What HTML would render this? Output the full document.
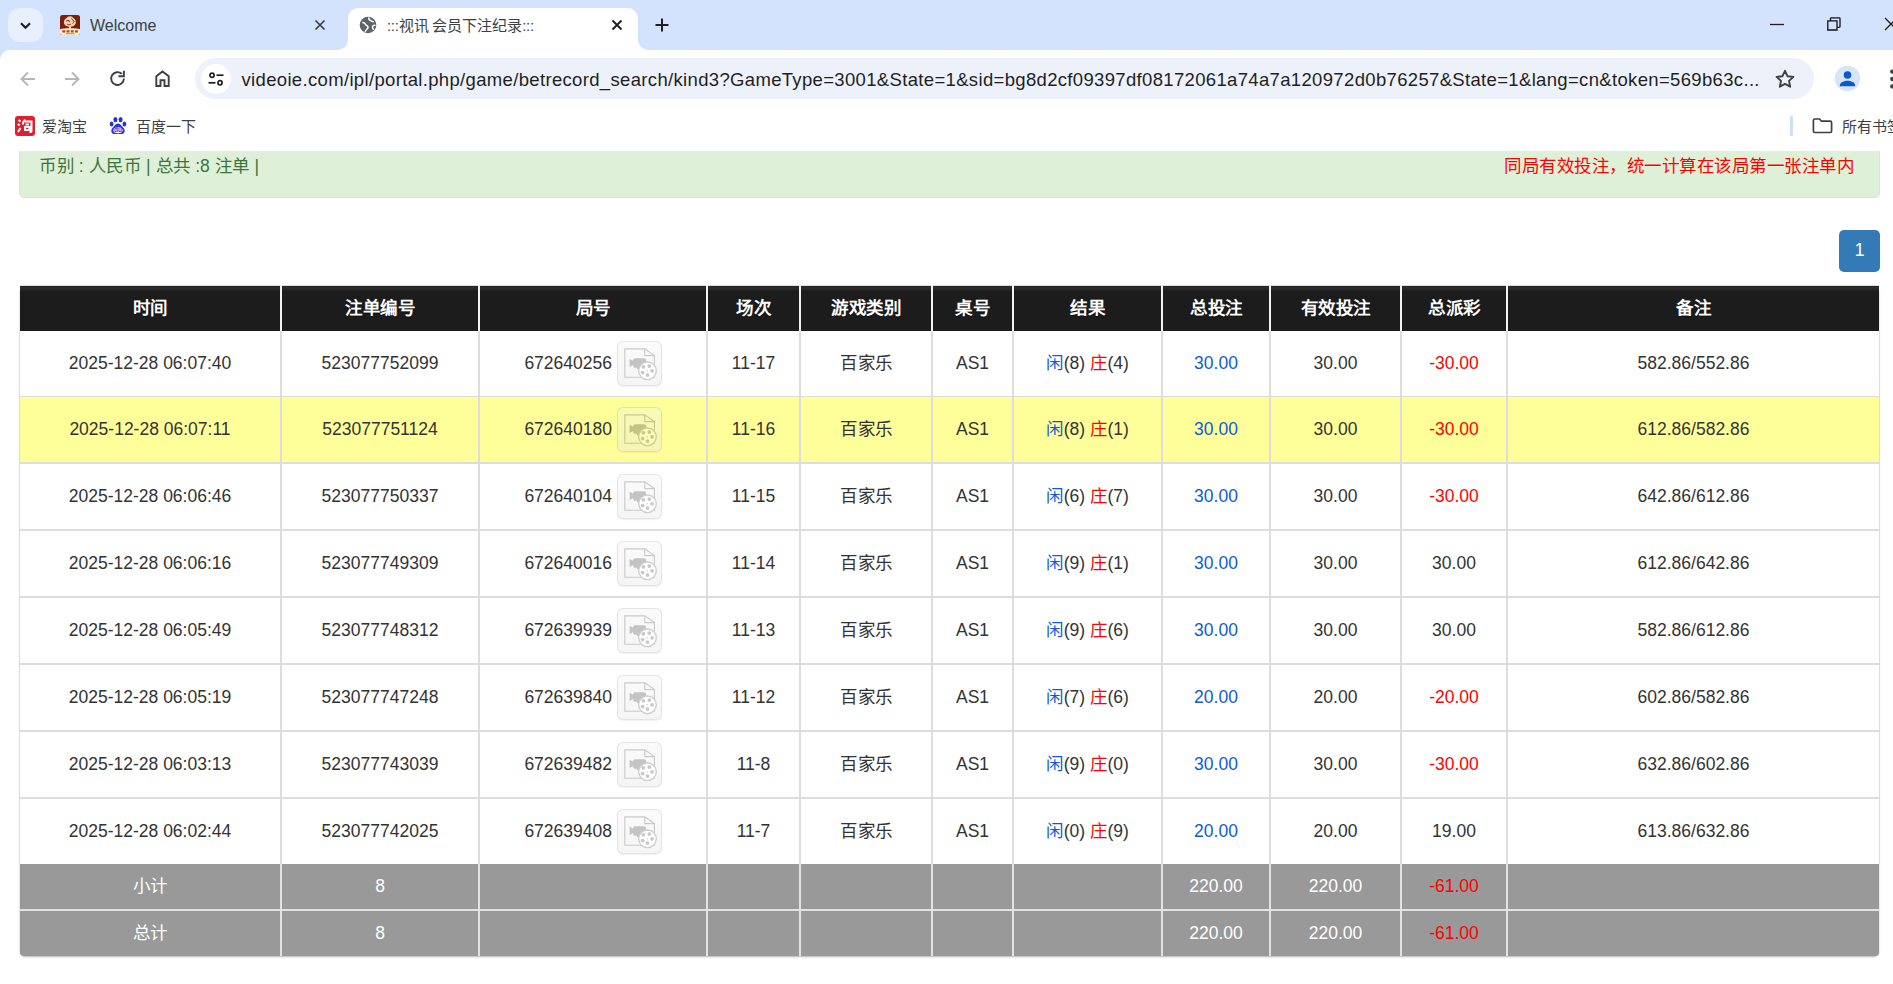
<!DOCTYPE html>
<html lang="zh-CN">
<head>
<meta charset="utf-8">
<title>:::视讯 会员下注纪录:::</title>
<style>
*{box-sizing:border-box;margin:0;padding:0}
html,body{width:1893px;height:984px;overflow:hidden;background:#fff}
body{position:relative;font-family:"Liberation Sans",sans-serif;color:#333}
.abs{position:absolute}
svg{display:block}
i{display:inline-block;width:1em;text-align:center;font-style:normal;white-space:nowrap}
/* ---------- chrome ---------- */
#tabstrip{position:absolute;left:0;top:0;width:1893px;height:50px;background:#d3e3fd}
#tabsearch{position:absolute;left:8px;top:8px;width:35px;height:34px;border-radius:12px;background:#e8effd}
.tabtitle{position:absolute;top:15.5px;font-size:16px;line-height:20px;color:#3c4043;white-space:nowrap}
#tab2{position:absolute;left:348px;top:7.500px;width:289.500px;height:42px;background:#fff;border-radius:10px 10px 0 0}
#tab2:before,#tab2:after{content:"";position:absolute;bottom:0;width:10px;height:10px}
#tab2:before{left:-10px;background:radial-gradient(circle at 0 0,rgba(255,255,255,0) 9.5px,#fff 10px)}
#tab2:after{right:-10px;background:radial-gradient(circle at 100% 0,rgba(255,255,255,0) 9.5px,#fff 10px)}
#toolbar{position:absolute;left:0;top:50px;width:1893px;height:58px;background:#fff;border-radius:10px 0 0 0}
#tbcorner{position:absolute;left:0;top:50px;width:10px;height:10px;background:#d3e3fd}
#omni{position:absolute;left:195px;top:58px;width:1619px;height:41px;border-radius:20.5px;background:#edf1fa}
#siteinfo{position:absolute;left:201px;top:64px;width:30px;height:30px;border-radius:15px;background:#fff}
#bm{position:absolute;left:0;top:108px;width:1893px;height:40px;background:#fff}
.bmt{position:absolute;top:117px;font-size:15px;line-height:20px;color:#3c4043;white-space:nowrap}
/* ---------- page ---------- */
#alert{position:absolute;left:19px;top:130px;width:1861px;height:68px;background:#dff0d8;border:1px solid #d6e9c6;border-radius:5px;clip-path:inset(21px 0 0 0)}
#alert .l{position:absolute;left:19px;top:23px;font-size:17.5px;line-height:25px;color:#3c763d;white-space:nowrap}
#alert .rt{position:absolute;right:25px;top:23px;font-size:17.5px;line-height:25px;color:#ff0000;white-space:nowrap}
#pg{position:absolute;left:1839px;top:230px;width:41px;height:42px;border-radius:5px;background:#337ab7;color:#fff;font-size:17.5px;line-height:40px;text-align:center}
.tbl{position:absolute;left:0;top:0;width:1893px;height:984px;font-size:17.5px;line-height:25px}
.tbl:before{content:"";position:absolute;left:20px;top:290px;width:1859px;height:666px;border-radius:0 0 5px 5px;box-shadow:0 1px 2px rgba(0,0,0,.3)}
.hd{position:absolute;background:linear-gradient(#262626 0,#262626 1px,#2d2d2d 1px,#2a2a2a 2.500px,#1c1c1c 5.500px,#1c1c1c 100%);box-shadow:0 -1px 0 rgba(0,0,0,.13)}
.hs{position:absolute;top:285px;width:2px;height:46px;background:#f2f2f2}
.c{position:absolute;top:0;height:100%;display:flex;align-items:center;justify-content:center;white-space:pre;text-align:center;padding-bottom:0}
.hc{color:#fff;font-weight:bold;text-shadow:0 1px 1px rgba(0,0,0,.6);padding-bottom:1px}
.rw{position:absolute;left:20px;width:1859px;background:#fff}
.rw .c{margin-left:-20px}
.hl{background:#ffff99}
.ft{background:#999;color:#fff}
.ft .c{padding-bottom:0}
.hl1{position:absolute;left:20px;width:1859px;background:#ddd}
.hl2{position:absolute;left:20px;width:1859px;background:#e2e2e2}
.vl{position:absolute;top:331px;width:2px;height:625px;background:linear-gradient(#ddd 533px,#e2e2e2 533px)}
.vo{position:absolute;top:331px;width:1px;height:622px;background:linear-gradient(#ddd 533px,#e9e9e9 533px)}
.ft2{border-radius:0 0 4px 4px}
.b{color:#0d5bdd}
.r{color:#ff0000}
.vb{display:block;width:45px;height:45px;margin-left:5px;border-radius:6px;background:linear-gradient(#f4f4f4,#e4e4e4);opacity:.35;box-shadow:inset 0 0 0 1px #b4b4b4,0 1px 1px rgba(0,0,0,.15)}
.g .gn{position:absolute;right:94px;top:0;height:100%;display:flex;align-items:center}
.g .vb{position:absolute;left:137px;top:10px;margin:0}
</style>
</head>
<body>
<!-- ======= Chrome tab strip ======= -->
<div id="tabstrip">
  <div id="tabsearch"><svg class="abs" style="left:10px;top:10px" width="15" height="15" viewBox="0 0 15 15"><path d="M3 5.2l4.5 4.5L12 5.2" fill="none" stroke="#1f1f1f" stroke-width="2.1"/></svg></div>
  <!-- tab 1 -->
  <svg class="abs" style="left:60px;top:15px" width="20" height="20" viewBox="0 0 20 20"><rect width="20" height="20" rx="2.500" fill="#7b1f07"/><path d="M10.300 1.200c1.500 0 2.300.9 3 1.900 1.500.7 2.600 2.300 2.600 4.200 0 2.400-1.800 3.700-3.800 4.100l-1.300.3.600 2.300H8.600l.6-2.300-1.500-.3C5.500 11 3.900 9.500 3.900 7.200c0-2 1-3.300 2.400-4C7.100 2 8.600 1.200 10.300 1.200z" fill="#f3d3b8"/><path d="M6 6.500c1-1.500 3-1.500 4 0M7 9c1.200 1 3 1 4 0M11.500 3.500l2.500 3M12.500 8.500c.8-.5 1.500-1.500 1.500-2.500M8.200 5.200l1.500 2" fill="none" stroke="#8a2a10" stroke-width=".9"/><path d="M0 14.200c3.500-1.300 16.500-1.300 20 0V17.500a2.500 2.500 0 0 1-2.500 2.500h-15A2.500 2.500 0 0 1 0 17.500z" fill="#fdf1cd"/><path d="M2.300 15.200h3v2.200h-3zM6.500 15.200h3v2.200h-3zM10.700 15.200h3v2.200h-3zM14.900 15.200h3v2.200h-3z" fill="#b5452a"/><path d="M6 18.200h8.500v1H6z" fill="#c9826a"/></svg>
  <div class="tabtitle" style="left:90px">Welcome</div>
  <svg class="abs" style="left:314px;top:19px" width="12" height="12" viewBox="0 0 12 12"><path d="M1.500 1.500l9 9M10.500 1.500l-9 9" stroke="#3c4043" stroke-width="1.7"/></svg>
  <!-- tab 2 (active) -->
  <div id="tab2"></div>
  <svg class="abs" style="left:359px;top:16px" width="18" height="18" viewBox="0 0 18 18"><circle cx="9" cy="9" r="8.3" fill="#5f6368"/><path d="M3.200 6.500c1.500-.2 2.500.3 3 1.500s1.600 1.200 2.300 2 .300 2.500-.8 3.500S6.500 15 6 15.800M10 1.500c-.5 1.500.2 2.500 1.500 3s2 1.500 3.500 1.200M16.500 9.500c-1.500-.5-2.800 0-3 1.300s.7 2.400 1.200 3" fill="none" stroke="#fff" stroke-width="1.500"/></svg>
  <div class="tabtitle" style="left:387px;font-size:15px;letter-spacing:-.350px">:::<i>视</i><i>讯</i> <i>会</i><i>员</i><i>下</i><i>注</i><i>纪</i><i>录</i>:::</div>
  <svg class="abs" style="left:611px;top:19px" width="12" height="12" viewBox="0 0 12 12"><path d="M1.500 1.500l9 9M10.500 1.500l-9 9" stroke="#1f1f1f" stroke-width="1.900"/></svg>
  <!-- new tab -->
  <svg class="abs" style="left:655px;top:18px" width="14" height="14" viewBox="0 0 14 14"><path d="M7 .5v13M.5 7h13" stroke="#1f1f1f" stroke-width="2"/></svg>
  <!-- window controls -->
  <svg class="abs" style="left:1770px;top:23px" width="14" height="3" viewBox="0 0 14 3"><path d="M0 1.500h14" stroke="#1f1f1f" stroke-width="1.300"/></svg>
  <svg class="abs" style="left:1827px;top:17px" width="14" height="14" viewBox="0 0 14 14"><path d="M.8 3.800h9.200v9.200H.8z M3.500 3.800V1.600q0-.8.800-.8h7.900q.8 0 .8.800v7.900q0 .8-.8.800H10" fill="none" stroke="#111" stroke-width="1.300"/></svg>
  <svg class="abs" style="left:1884px;top:17px" width="14" height="14" viewBox="0 0 14 14"><path d="M1 1l12 12M13 1L1 13" stroke="#1f1f1f" stroke-width="1.300"/></svg>
</div>
<!-- ======= toolbar ======= -->
<div id="tbcorner"></div>
<div id="toolbar"></div>
<svg class="abs" style="left:19px;top:70px" width="18" height="18" viewBox="0 0 18 18"><path d="M16 9H3M9 2.500L2.500 9 9 15.500" fill="none" stroke="#b4b7bb" stroke-width="1.900"/></svg>
<svg class="abs" style="left:63px;top:70px" width="18" height="18" viewBox="0 0 18 18"><path d="M2 9h13M9 2.500L15.500 9 9 15.500" fill="none" stroke="#b4b7bb" stroke-width="1.900"/></svg>
<svg class="abs" style="left:108px;top:69px" width="19" height="19" viewBox="0 0 19 19"><path d="M15.900 9.500a6.400 6.400 0 1 1-2-4.600" fill="none" stroke="#3c4043" stroke-width="1.900"/><path d="M15.900 1.800v5.400h-5.400" fill="none" stroke="#3c4043" stroke-width="1.900"/></svg>
<svg class="abs" style="left:154px;top:69px" width="17" height="19" viewBox="0 0 17 19"><path d="M2.300 7.300L8.500 2.400l6.200 4.900V17h-4.200v-5.800h-4V17H2.300z" fill="none" stroke="#3c4043" stroke-width="1.900" stroke-linejoin="miter"/></svg>
<div id="omni"></div>
<div id="siteinfo"><svg class="abs" style="left:7px;top:8px" width="16" height="14" viewBox="0 0 16 14"><circle cx="4" cy="3.200" r="2.100" fill="none" stroke="#1f1f1f" stroke-width="1.700"/><path d="M8.500 3.200h7" stroke="#1f1f1f" stroke-width="1.700"/><circle cx="12" cy="10.800" r="2.100" fill="none" stroke="#1f1f1f" stroke-width="1.700"/><path d="M.5 10.800h7" stroke="#1f1f1f" stroke-width="1.700"/></svg></div>
<svg class="abs" style="left:241px;top:60px" width="1540" height="38" viewBox="0 0 1540 38"><text x="0.500" y="25.800" font-family="Liberation Sans, sans-serif" font-size="18.500" fill="#1f1f1f" textLength="1518" lengthAdjust="spacing">videoie.com/ipl/portal.php/game/betrecord_search/kind3?GameType=3001&amp;State=1&amp;sid=bg8d2cf09397df08172061a74a7a120972d0b76257&amp;State=1&amp;lang=cn&amp;token=569b63c...</text></svg>
<svg class="abs" style="left:1774px;top:68px" width="22" height="22" viewBox="0 0 22 22"><path d="M11 2.800l2.500 5.400 5.900.7-4.400 4 1.200 5.800L11 15.800l-5.200 2.900L7 12.900l-4.400-4 5.900-.7z" fill="none" stroke="#3c4043" stroke-width="1.900" stroke-linejoin="round"/></svg>
<svg class="abs" style="left:1834px;top:65px" width="27" height="27" viewBox="0 0 27 27"><circle cx="13.500" cy="13.500" r="12.700" fill="#d8e4fc"/><circle cx="13.500" cy="10" r="3.800" fill="#0b57d0"/><path d="M5.800 20.500c0-3.300 4.500-4.800 7.700-4.800s7.700 1.500 7.700 4.800v.8H5.800z" fill="#0b57d0"/></svg>
<svg class="abs" style="left:1890px;top:69px" width="5" height="20" viewBox="0 0 5 20"><circle cx="2.300" cy="2.600" r="2.200" fill="#3c4043"/><circle cx="2.300" cy="10" r="2.200" fill="#3c4043"/><circle cx="2.300" cy="17.400" r="2.200" fill="#3c4043"/></svg>
<!-- ======= bookmarks bar ======= -->
<div id="bm"></div>
<svg class="abs" style="left:15px;top:116px" width="20" height="20" viewBox="0 0 20 20"><rect width="20" height="20" rx="3" fill="#e0202c"/><path d="M3.500 4l2 1.500M2.800 8l2 1.300M3 16l2.500-4M8 5.500h8.500v9.500c0 1-1 1-2 1M8 5.500v3M10 3.500l-1 2M10.500 8.500h3.500M10 11h4.500v3H10z" fill="none" stroke="#fff" stroke-width="2"/></svg>
<div class="bmt" style="left:42px"><i>爱</i><i>淘</i><i>宝</i></div>
<svg class="abs" style="left:109px;top:116px" width="18" height="19" viewBox="0 0 18 19"><ellipse cx="2.600" cy="8" rx="1.900" ry="2.500" fill="#2932e1"/><ellipse cx="6.400" cy="3.600" rx="2" ry="2.700" fill="#2932e1"/><ellipse cx="11.600" cy="3.600" rx="2" ry="2.700" fill="#2932e1"/><ellipse cx="15.400" cy="8" rx="1.900" ry="2.500" fill="#2932e1"/><path d="M9 7.500c2.500 0 3.500 2.500 5.500 4.500s1.500 5.500-1.500 6c-1.800.3-2.500-.3-4-.3s-2.200.6-4 .3c-3-.5-3.500-4-1.500-6S6.500 7.500 9 7.500z" fill="#2932e1"/><ellipse cx="9" cy="14.200" rx="4.600" ry="2.900" fill="#fff"/><text x="9" y="16.300" text-anchor="middle" font-family="Liberation Sans, sans-serif" font-weight="bold" font-size="6.500" fill="#2932e1">du</text></svg>
<div class="bmt" style="left:136px"><i>百</i><i>度</i><i>一</i><i>下</i></div>
<div class="abs" style="left:1790px;top:116px;width:3px;height:20px;background:#cfdefa;border-radius:1px"></div>
<svg class="abs" style="left:1812px;top:117px" width="21" height="17" viewBox="0 0 21 17"><path d="M1.400 3.500q0-1.500 1.500-1.500h4.600l2 2.200h8.600q1.500 0 1.500 1.500v8.300q0 1.500-1.500 1.500H2.900q-1.500 0-1.500-1.500z" fill="none" stroke="#3c4043" stroke-width="1.700" stroke-linejoin="round"/></svg>
<div class="bmt" style="left:1842px"><i>所</i><i>有</i><i>书</i><i>签</i></div>
<!-- ======= page content ======= -->
<div id="alert"><div class="l"><i>币</i><i>别</i> : <i>人</i><i>民</i><i>币</i> | <i>总</i><i>共</i> :8 <i>注</i><i>单</i> |</div><div class="rt"><i>同</i><i>局</i><i>有</i><i>效</i><i>投</i><i>注</i><i>，</i><i>统</i><i>一</i><i>计</i><i>算</i><i>在</i><i>该</i><i>局</i><i>第</i><i>一</i><i>张</i><i>注</i><i>单</i><i>内</i></div></div>
<div id="pg">1</div>
<div class="tbl">
<div class="hd" style="left:20px;top:286px;width:1859px;height:45px"></div>
<div class="c hc" style="left:20px;top:286px;width:260px;height:45px"><span><i>时</i><i>间</i></span></div>
<div class="c hc" style="left:282px;top:286px;width:196px;height:45px"><span><i>注</i><i>单</i><i>编</i><i>号</i></span></div>
<div class="c hc" style="left:480px;top:286px;width:226px;height:45px"><span><i>局</i><i>号</i></span></div>
<div class="c hc" style="left:708px;top:286px;width:91px;height:45px"><span><i>场</i><i>次</i></span></div>
<div class="c hc" style="left:801px;top:286px;width:130px;height:45px"><span><i>游</i><i>戏</i><i>类</i><i>别</i></span></div>
<div class="c hc" style="left:933px;top:286px;width:79px;height:45px"><span><i>桌</i><i>号</i></span></div>
<div class="c hc" style="left:1014px;top:286px;width:147px;height:45px"><span><i>结</i><i>果</i></span></div>
<div class="c hc" style="left:1163px;top:286px;width:106px;height:45px"><span><i>总</i><i>投</i><i>注</i></span></div>
<div class="c hc" style="left:1271px;top:286px;width:129px;height:45px"><span><i>有</i><i>效</i><i>投</i><i>注</i></span></div>
<div class="c hc" style="left:1402px;top:286px;width:104px;height:45px"><span><i>总</i><i>派</i><i>彩</i></span></div>
<div class="c hc" style="left:1508px;top:286px;width:371px;height:45px"><span><i>备</i><i>注</i></span></div>
<div class="hs" style="left:280px"></div>
<div class="hs" style="left:478px"></div>
<div class="hs" style="left:706px"></div>
<div class="hs" style="left:799px"></div>
<div class="hs" style="left:931px"></div>
<div class="hs" style="left:1012px"></div>
<div class="hs" style="left:1161px"></div>
<div class="hs" style="left:1269px"></div>
<div class="hs" style="left:1400px"></div>
<div class="hs" style="left:1506px"></div>
<div class="rw" style="top:331px;height:65px">
<div class="c" style="left:20px;width:260px"><span>2025-12-28 06:07:40</span></div>
<div class="c" style="left:282px;width:196px"><span>523077752099</span></div>
<div class="c g" style="left:480px;width:226px"><span class="gn">672640256</span><span class="vb"><svg viewBox="0 0 45 45" width="45" height="45"><path d="M7.800 7.900H27.800L37.400 14.600V36.200H7.800Z" fill="none" stroke="#6a6a6a" stroke-width="1.150"/><path d="M27.800 7.900V14.600H37.400" fill="none" stroke="#6a6a6a" stroke-width="1.150"/><path d="M12.600 17.800l3.600 2v-1.200c.5-1 1.500-1.300 2.500-1.300h8c1.500 0 2.500.8 2.500 2.300v5.400c0 1.200-1 1.800-2.200 1.800h-2.500v1.400h-4.500v-1.400h-1.600c-1.200 0-2.200-.6-2.200-1.800v-1l-3.600 2z" fill="#585858"/><circle cx="30.500" cy="29.800" r="8.800" fill="#fff" stroke="#787878" stroke-width="1.400"/><circle cx="26.400" cy="25.800" r="1.900" fill="#666"/><circle cx="32.300" cy="25.100" r="1.900" fill="#666"/><circle cx="35.100" cy="29.800" r="1.900" fill="#666"/><circle cx="30.500" cy="34.100" r="1.900" fill="#666"/><circle cx="25.600" cy="31.600" r="1.900" fill="#666"/><circle cx="30.200" cy="29.800" r=".7" fill="#666"/></svg></span></div>
<div class="c" style="left:708px;width:91px"><span>11-17</span></div>
<div class="c" style="left:801px;width:130px"><span><i>百</i><i>家</i><i>乐</i></span></div>
<div class="c" style="left:933px;width:79px"><span>AS1</span></div>
<div class="c" style="left:1014px;width:147px"><span><span class="b"><i>闲</i></span>(8) <span class="r"><i>庄</i></span>(4)</span></div>
<div class="c b" style="left:1163px;width:106px"><span>30.00</span></div>
<div class="c" style="left:1271px;width:129px"><span>30.00</span></div>
<div class="c r" style="left:1402px;width:104px"><span>-30.00</span></div>
<div class="c" style="left:1508px;width:371px"><span>582.86/552.86</span></div>
</div>
<div class="rw hl" style="top:397px;height:65px">
<div class="c" style="left:20px;width:260px"><span>2025-12-28 06:07:11</span></div>
<div class="c" style="left:282px;width:196px"><span>523077751124</span></div>
<div class="c g" style="left:480px;width:226px"><span class="gn">672640180</span><span class="vb"><svg viewBox="0 0 45 45" width="45" height="45"><path d="M7.800 7.900H27.800L37.400 14.600V36.200H7.800Z" fill="none" stroke="#6a6a6a" stroke-width="1.150"/><path d="M27.800 7.900V14.600H37.400" fill="none" stroke="#6a6a6a" stroke-width="1.150"/><path d="M12.600 17.800l3.600 2v-1.200c.5-1 1.500-1.300 2.500-1.300h8c1.500 0 2.500.8 2.500 2.300v5.400c0 1.200-1 1.800-2.200 1.800h-2.500v1.400h-4.500v-1.400h-1.600c-1.200 0-2.200-.6-2.200-1.800v-1l-3.600 2z" fill="#585858"/><circle cx="30.500" cy="29.800" r="8.800" fill="#fff" stroke="#787878" stroke-width="1.400"/><circle cx="26.400" cy="25.800" r="1.900" fill="#666"/><circle cx="32.300" cy="25.100" r="1.900" fill="#666"/><circle cx="35.100" cy="29.800" r="1.900" fill="#666"/><circle cx="30.500" cy="34.100" r="1.900" fill="#666"/><circle cx="25.600" cy="31.600" r="1.900" fill="#666"/><circle cx="30.200" cy="29.800" r=".7" fill="#666"/></svg></span></div>
<div class="c" style="left:708px;width:91px"><span>11-16</span></div>
<div class="c" style="left:801px;width:130px"><span><i>百</i><i>家</i><i>乐</i></span></div>
<div class="c" style="left:933px;width:79px"><span>AS1</span></div>
<div class="c" style="left:1014px;width:147px"><span><span class="b"><i>闲</i></span>(8) <span class="r"><i>庄</i></span>(1)</span></div>
<div class="c b" style="left:1163px;width:106px"><span>30.00</span></div>
<div class="c" style="left:1271px;width:129px"><span>30.00</span></div>
<div class="c r" style="left:1402px;width:104px"><span>-30.00</span></div>
<div class="c" style="left:1508px;width:371px"><span>612.86/582.86</span></div>
</div>
<div class="rw" style="top:464px;height:65px">
<div class="c" style="left:20px;width:260px"><span>2025-12-28 06:06:46</span></div>
<div class="c" style="left:282px;width:196px"><span>523077750337</span></div>
<div class="c g" style="left:480px;width:226px"><span class="gn">672640104</span><span class="vb"><svg viewBox="0 0 45 45" width="45" height="45"><path d="M7.800 7.900H27.800L37.400 14.600V36.200H7.800Z" fill="none" stroke="#6a6a6a" stroke-width="1.150"/><path d="M27.800 7.900V14.600H37.400" fill="none" stroke="#6a6a6a" stroke-width="1.150"/><path d="M12.600 17.800l3.600 2v-1.200c.5-1 1.500-1.300 2.500-1.300h8c1.500 0 2.500.8 2.500 2.300v5.400c0 1.200-1 1.800-2.200 1.800h-2.500v1.400h-4.500v-1.400h-1.600c-1.200 0-2.200-.6-2.200-1.800v-1l-3.600 2z" fill="#585858"/><circle cx="30.500" cy="29.800" r="8.800" fill="#fff" stroke="#787878" stroke-width="1.400"/><circle cx="26.400" cy="25.800" r="1.900" fill="#666"/><circle cx="32.300" cy="25.100" r="1.900" fill="#666"/><circle cx="35.100" cy="29.800" r="1.900" fill="#666"/><circle cx="30.500" cy="34.100" r="1.900" fill="#666"/><circle cx="25.600" cy="31.600" r="1.900" fill="#666"/><circle cx="30.200" cy="29.800" r=".7" fill="#666"/></svg></span></div>
<div class="c" style="left:708px;width:91px"><span>11-15</span></div>
<div class="c" style="left:801px;width:130px"><span><i>百</i><i>家</i><i>乐</i></span></div>
<div class="c" style="left:933px;width:79px"><span>AS1</span></div>
<div class="c" style="left:1014px;width:147px"><span><span class="b"><i>闲</i></span>(6) <span class="r"><i>庄</i></span>(7)</span></div>
<div class="c b" style="left:1163px;width:106px"><span>30.00</span></div>
<div class="c" style="left:1271px;width:129px"><span>30.00</span></div>
<div class="c r" style="left:1402px;width:104px"><span>-30.00</span></div>
<div class="c" style="left:1508px;width:371px"><span>642.86/612.86</span></div>
</div>
<div class="rw" style="top:531px;height:65px">
<div class="c" style="left:20px;width:260px"><span>2025-12-28 06:06:16</span></div>
<div class="c" style="left:282px;width:196px"><span>523077749309</span></div>
<div class="c g" style="left:480px;width:226px"><span class="gn">672640016</span><span class="vb"><svg viewBox="0 0 45 45" width="45" height="45"><path d="M7.800 7.900H27.800L37.400 14.600V36.200H7.800Z" fill="none" stroke="#6a6a6a" stroke-width="1.150"/><path d="M27.800 7.900V14.600H37.400" fill="none" stroke="#6a6a6a" stroke-width="1.150"/><path d="M12.600 17.800l3.600 2v-1.200c.5-1 1.500-1.300 2.500-1.300h8c1.500 0 2.500.8 2.500 2.300v5.400c0 1.200-1 1.800-2.200 1.800h-2.500v1.400h-4.500v-1.400h-1.600c-1.200 0-2.200-.6-2.200-1.800v-1l-3.600 2z" fill="#585858"/><circle cx="30.500" cy="29.800" r="8.800" fill="#fff" stroke="#787878" stroke-width="1.400"/><circle cx="26.400" cy="25.800" r="1.900" fill="#666"/><circle cx="32.300" cy="25.100" r="1.900" fill="#666"/><circle cx="35.100" cy="29.800" r="1.900" fill="#666"/><circle cx="30.500" cy="34.100" r="1.900" fill="#666"/><circle cx="25.600" cy="31.600" r="1.900" fill="#666"/><circle cx="30.200" cy="29.800" r=".7" fill="#666"/></svg></span></div>
<div class="c" style="left:708px;width:91px"><span>11-14</span></div>
<div class="c" style="left:801px;width:130px"><span><i>百</i><i>家</i><i>乐</i></span></div>
<div class="c" style="left:933px;width:79px"><span>AS1</span></div>
<div class="c" style="left:1014px;width:147px"><span><span class="b"><i>闲</i></span>(9) <span class="r"><i>庄</i></span>(1)</span></div>
<div class="c b" style="left:1163px;width:106px"><span>30.00</span></div>
<div class="c" style="left:1271px;width:129px"><span>30.00</span></div>
<div class="c" style="left:1402px;width:104px"><span>30.00</span></div>
<div class="c" style="left:1508px;width:371px"><span>612.86/642.86</span></div>
</div>
<div class="rw" style="top:598px;height:65px">
<div class="c" style="left:20px;width:260px"><span>2025-12-28 06:05:49</span></div>
<div class="c" style="left:282px;width:196px"><span>523077748312</span></div>
<div class="c g" style="left:480px;width:226px"><span class="gn">672639939</span><span class="vb"><svg viewBox="0 0 45 45" width="45" height="45"><path d="M7.800 7.900H27.800L37.400 14.600V36.200H7.800Z" fill="none" stroke="#6a6a6a" stroke-width="1.150"/><path d="M27.800 7.900V14.600H37.400" fill="none" stroke="#6a6a6a" stroke-width="1.150"/><path d="M12.600 17.800l3.600 2v-1.200c.5-1 1.500-1.300 2.500-1.300h8c1.500 0 2.500.8 2.500 2.300v5.400c0 1.200-1 1.800-2.200 1.800h-2.500v1.400h-4.500v-1.400h-1.600c-1.200 0-2.200-.6-2.200-1.800v-1l-3.600 2z" fill="#585858"/><circle cx="30.500" cy="29.800" r="8.800" fill="#fff" stroke="#787878" stroke-width="1.400"/><circle cx="26.400" cy="25.800" r="1.900" fill="#666"/><circle cx="32.300" cy="25.100" r="1.900" fill="#666"/><circle cx="35.100" cy="29.800" r="1.900" fill="#666"/><circle cx="30.500" cy="34.100" r="1.900" fill="#666"/><circle cx="25.600" cy="31.600" r="1.900" fill="#666"/><circle cx="30.200" cy="29.800" r=".7" fill="#666"/></svg></span></div>
<div class="c" style="left:708px;width:91px"><span>11-13</span></div>
<div class="c" style="left:801px;width:130px"><span><i>百</i><i>家</i><i>乐</i></span></div>
<div class="c" style="left:933px;width:79px"><span>AS1</span></div>
<div class="c" style="left:1014px;width:147px"><span><span class="b"><i>闲</i></span>(9) <span class="r"><i>庄</i></span>(6)</span></div>
<div class="c b" style="left:1163px;width:106px"><span>30.00</span></div>
<div class="c" style="left:1271px;width:129px"><span>30.00</span></div>
<div class="c" style="left:1402px;width:104px"><span>30.00</span></div>
<div class="c" style="left:1508px;width:371px"><span>582.86/612.86</span></div>
</div>
<div class="rw" style="top:665px;height:65px">
<div class="c" style="left:20px;width:260px"><span>2025-12-28 06:05:19</span></div>
<div class="c" style="left:282px;width:196px"><span>523077747248</span></div>
<div class="c g" style="left:480px;width:226px"><span class="gn">672639840</span><span class="vb"><svg viewBox="0 0 45 45" width="45" height="45"><path d="M7.800 7.900H27.800L37.400 14.600V36.200H7.800Z" fill="none" stroke="#6a6a6a" stroke-width="1.150"/><path d="M27.800 7.900V14.600H37.400" fill="none" stroke="#6a6a6a" stroke-width="1.150"/><path d="M12.600 17.800l3.600 2v-1.200c.5-1 1.500-1.300 2.500-1.300h8c1.500 0 2.500.8 2.500 2.300v5.400c0 1.200-1 1.800-2.200 1.800h-2.500v1.400h-4.500v-1.400h-1.600c-1.200 0-2.200-.6-2.200-1.800v-1l-3.600 2z" fill="#585858"/><circle cx="30.500" cy="29.800" r="8.800" fill="#fff" stroke="#787878" stroke-width="1.400"/><circle cx="26.400" cy="25.800" r="1.900" fill="#666"/><circle cx="32.300" cy="25.100" r="1.900" fill="#666"/><circle cx="35.100" cy="29.800" r="1.900" fill="#666"/><circle cx="30.500" cy="34.100" r="1.900" fill="#666"/><circle cx="25.600" cy="31.600" r="1.900" fill="#666"/><circle cx="30.200" cy="29.800" r=".7" fill="#666"/></svg></span></div>
<div class="c" style="left:708px;width:91px"><span>11-12</span></div>
<div class="c" style="left:801px;width:130px"><span><i>百</i><i>家</i><i>乐</i></span></div>
<div class="c" style="left:933px;width:79px"><span>AS1</span></div>
<div class="c" style="left:1014px;width:147px"><span><span class="b"><i>闲</i></span>(7) <span class="r"><i>庄</i></span>(6)</span></div>
<div class="c b" style="left:1163px;width:106px"><span>20.00</span></div>
<div class="c" style="left:1271px;width:129px"><span>20.00</span></div>
<div class="c r" style="left:1402px;width:104px"><span>-20.00</span></div>
<div class="c" style="left:1508px;width:371px"><span>602.86/582.86</span></div>
</div>
<div class="rw" style="top:732px;height:65px">
<div class="c" style="left:20px;width:260px"><span>2025-12-28 06:03:13</span></div>
<div class="c" style="left:282px;width:196px"><span>523077743039</span></div>
<div class="c g" style="left:480px;width:226px"><span class="gn">672639482</span><span class="vb"><svg viewBox="0 0 45 45" width="45" height="45"><path d="M7.800 7.900H27.800L37.400 14.600V36.200H7.800Z" fill="none" stroke="#6a6a6a" stroke-width="1.150"/><path d="M27.800 7.900V14.600H37.400" fill="none" stroke="#6a6a6a" stroke-width="1.150"/><path d="M12.600 17.800l3.600 2v-1.200c.5-1 1.500-1.300 2.500-1.300h8c1.500 0 2.500.8 2.500 2.300v5.400c0 1.200-1 1.800-2.200 1.800h-2.500v1.400h-4.500v-1.400h-1.600c-1.200 0-2.200-.6-2.200-1.800v-1l-3.600 2z" fill="#585858"/><circle cx="30.500" cy="29.800" r="8.800" fill="#fff" stroke="#787878" stroke-width="1.400"/><circle cx="26.400" cy="25.800" r="1.900" fill="#666"/><circle cx="32.300" cy="25.100" r="1.900" fill="#666"/><circle cx="35.100" cy="29.800" r="1.900" fill="#666"/><circle cx="30.500" cy="34.100" r="1.900" fill="#666"/><circle cx="25.600" cy="31.600" r="1.900" fill="#666"/><circle cx="30.200" cy="29.800" r=".7" fill="#666"/></svg></span></div>
<div class="c" style="left:708px;width:91px"><span>11-8</span></div>
<div class="c" style="left:801px;width:130px"><span><i>百</i><i>家</i><i>乐</i></span></div>
<div class="c" style="left:933px;width:79px"><span>AS1</span></div>
<div class="c" style="left:1014px;width:147px"><span><span class="b"><i>闲</i></span>(9) <span class="r"><i>庄</i></span>(0)</span></div>
<div class="c b" style="left:1163px;width:106px"><span>30.00</span></div>
<div class="c" style="left:1271px;width:129px"><span>30.00</span></div>
<div class="c r" style="left:1402px;width:104px"><span>-30.00</span></div>
<div class="c" style="left:1508px;width:371px"><span>632.86/602.86</span></div>
</div>
<div class="rw" style="top:799px;height:65px">
<div class="c" style="left:20px;width:260px"><span>2025-12-28 06:02:44</span></div>
<div class="c" style="left:282px;width:196px"><span>523077742025</span></div>
<div class="c g" style="left:480px;width:226px"><span class="gn">672639408</span><span class="vb"><svg viewBox="0 0 45 45" width="45" height="45"><path d="M7.800 7.900H27.800L37.400 14.600V36.200H7.800Z" fill="none" stroke="#6a6a6a" stroke-width="1.150"/><path d="M27.800 7.900V14.600H37.400" fill="none" stroke="#6a6a6a" stroke-width="1.150"/><path d="M12.600 17.800l3.600 2v-1.200c.5-1 1.500-1.300 2.500-1.300h8c1.500 0 2.500.8 2.500 2.300v5.400c0 1.200-1 1.800-2.200 1.800h-2.500v1.400h-4.500v-1.400h-1.600c-1.200 0-2.200-.6-2.200-1.800v-1l-3.600 2z" fill="#585858"/><circle cx="30.500" cy="29.800" r="8.800" fill="#fff" stroke="#787878" stroke-width="1.400"/><circle cx="26.400" cy="25.800" r="1.900" fill="#666"/><circle cx="32.300" cy="25.100" r="1.900" fill="#666"/><circle cx="35.100" cy="29.800" r="1.900" fill="#666"/><circle cx="30.500" cy="34.100" r="1.900" fill="#666"/><circle cx="25.600" cy="31.600" r="1.900" fill="#666"/><circle cx="30.200" cy="29.800" r=".7" fill="#666"/></svg></span></div>
<div class="c" style="left:708px;width:91px"><span>11-7</span></div>
<div class="c" style="left:801px;width:130px"><span><i>百</i><i>家</i><i>乐</i></span></div>
<div class="c" style="left:933px;width:79px"><span>AS1</span></div>
<div class="c" style="left:1014px;width:147px"><span><span class="b"><i>闲</i></span>(0) <span class="r"><i>庄</i></span>(9)</span></div>
<div class="c b" style="left:1163px;width:106px"><span>20.00</span></div>
<div class="c" style="left:1271px;width:129px"><span>20.00</span></div>
<div class="c" style="left:1402px;width:104px"><span>19.00</span></div>
<div class="c" style="left:1508px;width:371px"><span>613.86/632.86</span></div>
</div>
<div class="rw ft" style="top:864px;height:45px">
<div class="c" style="left:20px;width:260px"><span><i>小</i><i>计</i></span></div>
<div class="c" style="left:282px;width:196px"><span>8</span></div>
<div class="c" style="left:480px;width:226px"><span></span></div>
<div class="c" style="left:708px;width:91px"><span></span></div>
<div class="c" style="left:801px;width:130px"><span></span></div>
<div class="c" style="left:933px;width:79px"><span></span></div>
<div class="c" style="left:1014px;width:147px"><span></span></div>
<div class="c" style="left:1163px;width:106px"><span>220.00</span></div>
<div class="c" style="left:1271px;width:129px"><span>220.00</span></div>
<div class="c r" style="left:1402px;width:104px"><span>-61.00</span></div>
<div class="c" style="left:1508px;width:371px"><span></span></div>
</div>
<div class="rw ft ft2" style="top:911px;height:45px">
<div class="c" style="left:20px;width:260px"><span><i>总</i><i>计</i></span></div>
<div class="c" style="left:282px;width:196px"><span>8</span></div>
<div class="c" style="left:480px;width:226px"><span></span></div>
<div class="c" style="left:708px;width:91px"><span></span></div>
<div class="c" style="left:801px;width:130px"><span></span></div>
<div class="c" style="left:933px;width:79px"><span></span></div>
<div class="c" style="left:1014px;width:147px"><span></span></div>
<div class="c" style="left:1163px;width:106px"><span>220.00</span></div>
<div class="c" style="left:1271px;width:129px"><span>220.00</span></div>
<div class="c r" style="left:1402px;width:104px"><span>-61.00</span></div>
<div class="c" style="left:1508px;width:371px"><span></span></div>
</div>
<div class="hl1" style="top:396px;height:1px"></div>
<div class="hl1" style="top:462px;height:2px"></div>
<div class="hl1" style="top:529px;height:2px"></div>
<div class="hl1" style="top:596px;height:2px"></div>
<div class="hl1" style="top:663px;height:2px"></div>
<div class="hl1" style="top:730px;height:2px"></div>
<div class="hl1" style="top:797px;height:2px"></div>
<div class="hl2" style="top:909px;height:2px"></div>
<div class="vl" style="left:280px"></div>
<div class="vl" style="left:478px"></div>
<div class="vl" style="left:706px"></div>
<div class="vl" style="left:799px"></div>
<div class="vl" style="left:931px"></div>
<div class="vl" style="left:1012px"></div>
<div class="vl" style="left:1161px"></div>
<div class="vl" style="left:1269px"></div>
<div class="vl" style="left:1400px"></div>
<div class="vl" style="left:1506px"></div>
<div class="vo" style="left:19px"></div><div class="vo" style="left:1879px"></div>
</div>
</body>
</html>
